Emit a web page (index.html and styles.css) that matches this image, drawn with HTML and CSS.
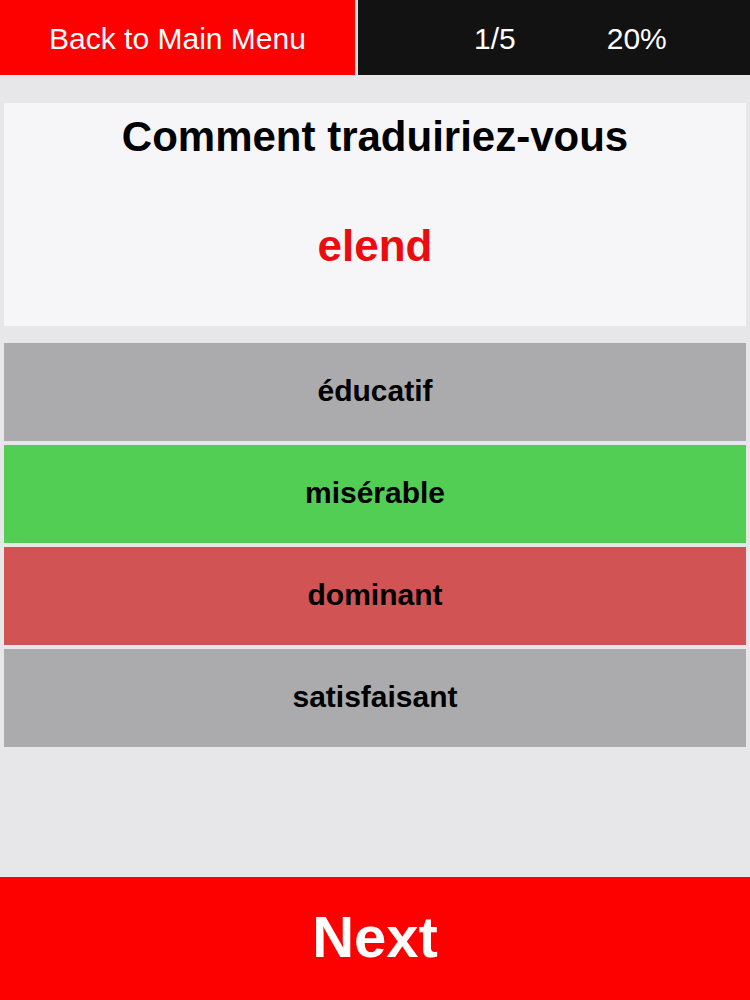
FILE: index.html
```html
<!DOCTYPE html>
<html lang="fr">
<head>
<meta charset="utf-8">
<title>Quiz</title>
<link rel="stylesheet" href="styles.css">
</head>
<body>
<div class="app">
  <header class="topbar">
    <div class="back">Back to Main Menu</div>
    <div class="progress">
      <span class="count">1/5</span>
      <span class="pct">20%</span>
    </div>
  </header>
  <main class="content">
    <section class="card">
      <div class="question">Comment traduiriez-vous</div>
      <div class="word">elend</div>
    </section>
    <div class="options">
      <div class="option neutral">éducatif</div>
      <div class="option correct">misérable</div>
      <div class="option wrong">dominant</div>
      <div class="option neutral">satisfaisant</div>
    </div>
  </main>
  <footer class="next">Next</footer>
</div>
</body>
</html>
```

FILE: styles.css
```css
html, body {
  margin: 0;
  padding: 0;
}
body {
  background: #e7e6e8;
  font-family: "Liberation Sans", Arial, sans-serif;
}
.app {
  height: 1000px;
  display: flex;
  flex-direction: column;
}
.topbar {
  height: 75px;
  display: flex;
  gap: 3px;
  background: #e2e1e3;
  color: #ffffff;
  font-size: 30px;
  flex: none;
}
.back {
  width: 355px;
  background: #fd0000;
  display: flex;
  align-items: center;
  justify-content: center;
  padding-top: 3px;
  box-sizing: border-box;
}
.progress {
  flex: 1;
  background: #121212;
  display: flex;
  align-items: center;
  padding-left: 116px;
  padding-top: 3px;
  gap: 91px;
}
.content {
  flex: 1;
  padding: 28px 4px 0;
}
.card {
  background: #f6f5f7;
  height: 223px;
  box-sizing: border-box;
  padding-top: 10px;
  text-align: center;
}
.question {
  font-size: 42px;
  line-height: 48px;
  font-weight: bold;
  color: #000;
}
.word {
  margin-top: 60px;
  font-size: 44px;
  line-height: 50px;
  font-weight: bold;
  color: #ec0b0e;
}
.options {
  margin-top: 17px;
  display: flex;
  flex-direction: column;
  gap: 4px;
}
.option {
  height: 98px;
  display: flex;
  align-items: center;
  justify-content: center;
  font-size: 30px;
  font-weight: bold;
  color: #000;
  padding-bottom: 2px;
  box-sizing: border-box;
}
.neutral { background: #abaaac; }
.correct { background: #52ce54; }
.wrong { background: #d15353; }
.next {
  flex: none;
  height: 123px;
  background: #fd0000;
  color: #fff;
  font-size: 58px;
  font-weight: bold;
  display: flex;
  align-items: center;
  justify-content: center;
  padding-bottom: 5px;
  box-sizing: border-box;
}
```
